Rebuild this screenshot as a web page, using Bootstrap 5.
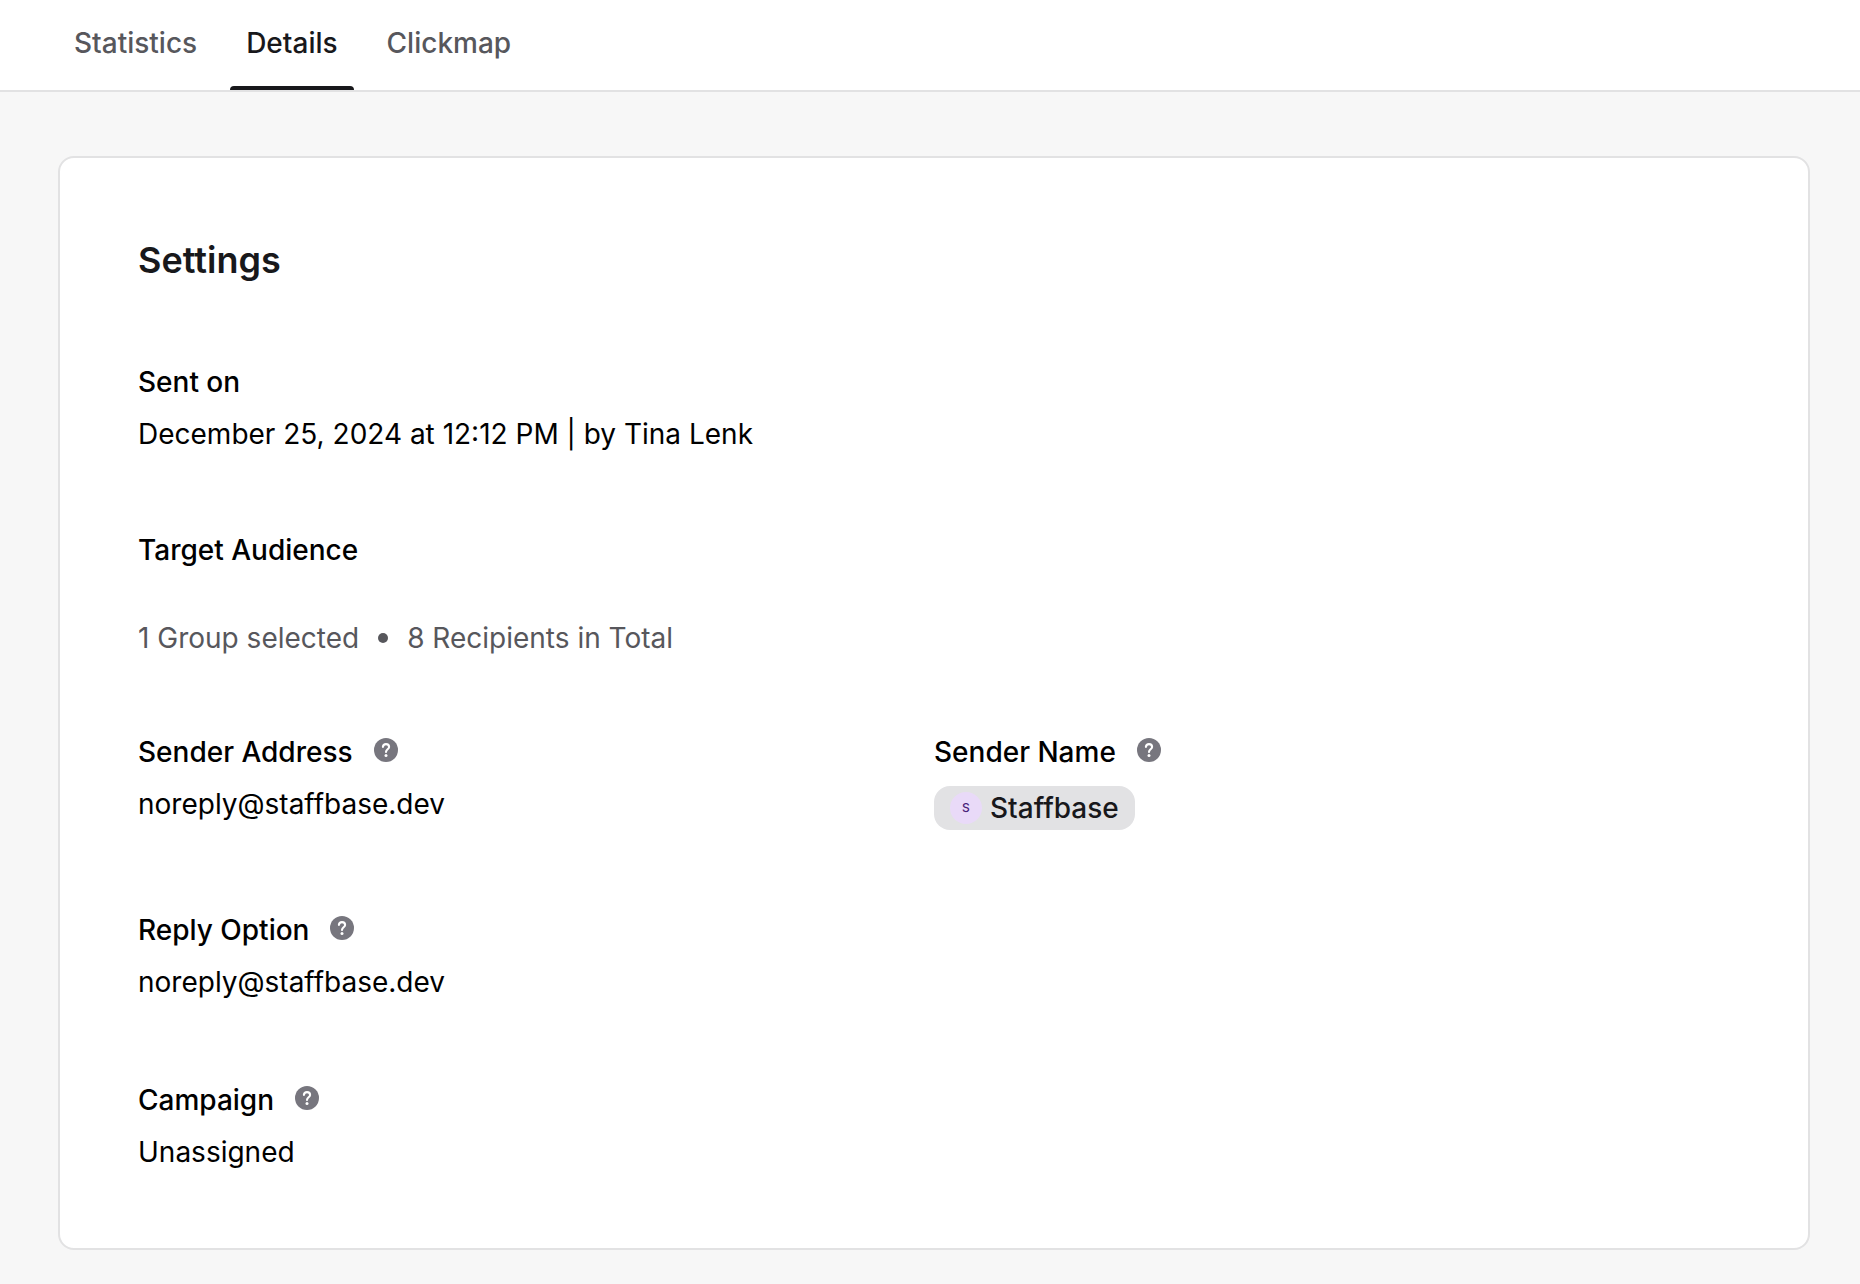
<!DOCTYPE html>
<html lang="en">
<head>
<meta charset="utf-8">
<meta name="viewport" content="width=device-width, initial-scale=1">
<title>Email details</title>
<link href="https://cdn.jsdelivr.net/npm/bootstrap@5.3.0/dist/css/bootstrap.min.css" rel="stylesheet">
<style>
  body { font-family: Inter, "Liberation Sans", sans-serif; font-size: 28px; line-height: 40px; color: #000; background: #f7f7f7; }
  .tab-header { border-bottom: 2px solid #e2e2e3; padding: 0 58px; }
  .tab-header .nav { gap: 17px; }
  .tab-header .nav-link { position: relative; padding: 23px 16px 27px; font-weight: 500; color: #57575c; }
  .tab-header .nav-link.active { color: #18181b; }
  .tab-header .nav-link.active::after { content: ""; position: absolute; left: 0; right: 0; bottom: 0; height: 4px; background: #18181b; border-radius: 4px 4px 0 0; }
  .page-body { padding: 64px 50px 32px 58px; }
  .settings-card { border: 2px solid #e2e2e3; border-radius: 16px; padding: 78px 78px 76px; color: inherit; }
  .settings-title { font-size: 36px; line-height: 48px; font-weight: 600; color: #18181b; margin-bottom: 78px; }
  .field-label { font-size: 28px; line-height: 40px; font-weight: 500; margin: 0; }
  .field-head { gap: 21px; margin-bottom: 12px; }
  .field-block { margin-bottom: 76px; }
  .field-block.audience { margin-bottom: 74px; }
  .field-block.sender { margin-bottom: 80px; }
  .field-block.reply { margin-bottom: 78px; }
  .field-block.last { margin-bottom: 0; }
  .audience-line { gap: 19px; margin-top: 48px; color: #57575c; }
  .dot { width: 10px; height: 10px; background: #57575c; }
  .help-btn { padding: 0 0 4px; line-height: 0; color: #77767e; border: 0; background: none; }
  .sender-chip { gap: 8px; height: 44px; padding: 0 16px; border-radius: 16px; background: #e2e2e4; color: #18181b; font-weight: 500; margin-top: 2px; }
  .avatar { width: 32px; height: 32px; background: #e9daf8; color: #4a2379; font-size: 12px; line-height: 16px; }
</style>
<script src="https://cdn.jsdelivr.net/npm/bootstrap@5.3.0/dist/js/bootstrap.bundle.min.js"></script>
</head>
<body>
<svg class="d-none" aria-hidden="true">
  <symbol id="help" viewBox="0 0 24 24">
    <circle cx="12" cy="12" r="12" fill="currentColor"/>
    <path d="M8.9 8.9C9.1 7.1 10.3 6.1 12 6.1s3.1 1.1 3.1 2.8c0 2.3-3.1 2.5-3.1 5" fill="none" stroke="#fff" stroke-width="2.1" stroke-linecap="round"/>
    <circle cx="12" cy="17.4" r="1.5" fill="#fff"/>
  </symbol>
</svg>
<header class="tab-header bg-white">
  <nav class="nav" aria-label="Email sections">
    <a class="nav-link" href="#statistics">Statistics</a>
    <a class="nav-link active" aria-current="page" href="#details">Details</a>
    <a class="nav-link" href="#clickmap">Clickmap</a>
  </nav>
</header>
<main class="page-body">
  <section class="card settings-card bg-white">
    <h1 class="settings-title">Settings</h1>
    <div class="field-block">
      <div class="field-head d-flex"><h2 class="field-label">Sent on</h2></div>
      <div>December 25, 2024 at 12:12 PM | by Tina Lenk</div>
    </div>
    <div class="field-block audience">
      <h2 class="field-label">Target Audience</h2>
      <div class="audience-line d-flex align-items-center">
        <span>1 Group selected</span>
        <span class="dot rounded-circle"></span>
        <span>8 Recipients in Total</span>
      </div>
    </div>
    <div class="row g-0 field-block sender">
      <div class="col-6">
        <div class="field-head d-flex align-items-center">
          <h2 class="field-label">Sender Address</h2>
          <button type="button" class="help-btn" aria-label="About sender address"><svg width="24" height="24"><use href="#help"/></svg></button>
        </div>
        <div>noreply@staffbase.dev</div>
      </div>
      <div class="col-6">
        <div class="field-head d-flex align-items-center">
          <h2 class="field-label">Sender Name</h2>
          <button type="button" class="help-btn" aria-label="About sender name"><svg width="24" height="24"><use href="#help"/></svg></button>
        </div>
        <div class="sender-chip d-inline-flex align-items-center align-top">
          <span class="avatar rounded-circle d-flex align-items-center justify-content-center">S</span>
          <span>Staffbase</span>
        </div>
      </div>
    </div>
    <div class="field-block reply">
      <div class="field-head d-flex align-items-center">
        <h2 class="field-label">Reply Option</h2>
        <button type="button" class="help-btn" aria-label="About reply option"><svg width="24" height="24"><use href="#help"/></svg></button>
      </div>
      <div>noreply@staffbase.dev</div>
    </div>
    <div class="field-block last">
      <div class="field-head d-flex align-items-center">
        <h2 class="field-label">Campaign</h2>
        <button type="button" class="help-btn" aria-label="About campaign"><svg width="24" height="24"><use href="#help"/></svg></button>
      </div>
      <div>Unassigned</div>
    </div>
  </section>
</main>
</body>
</html>
